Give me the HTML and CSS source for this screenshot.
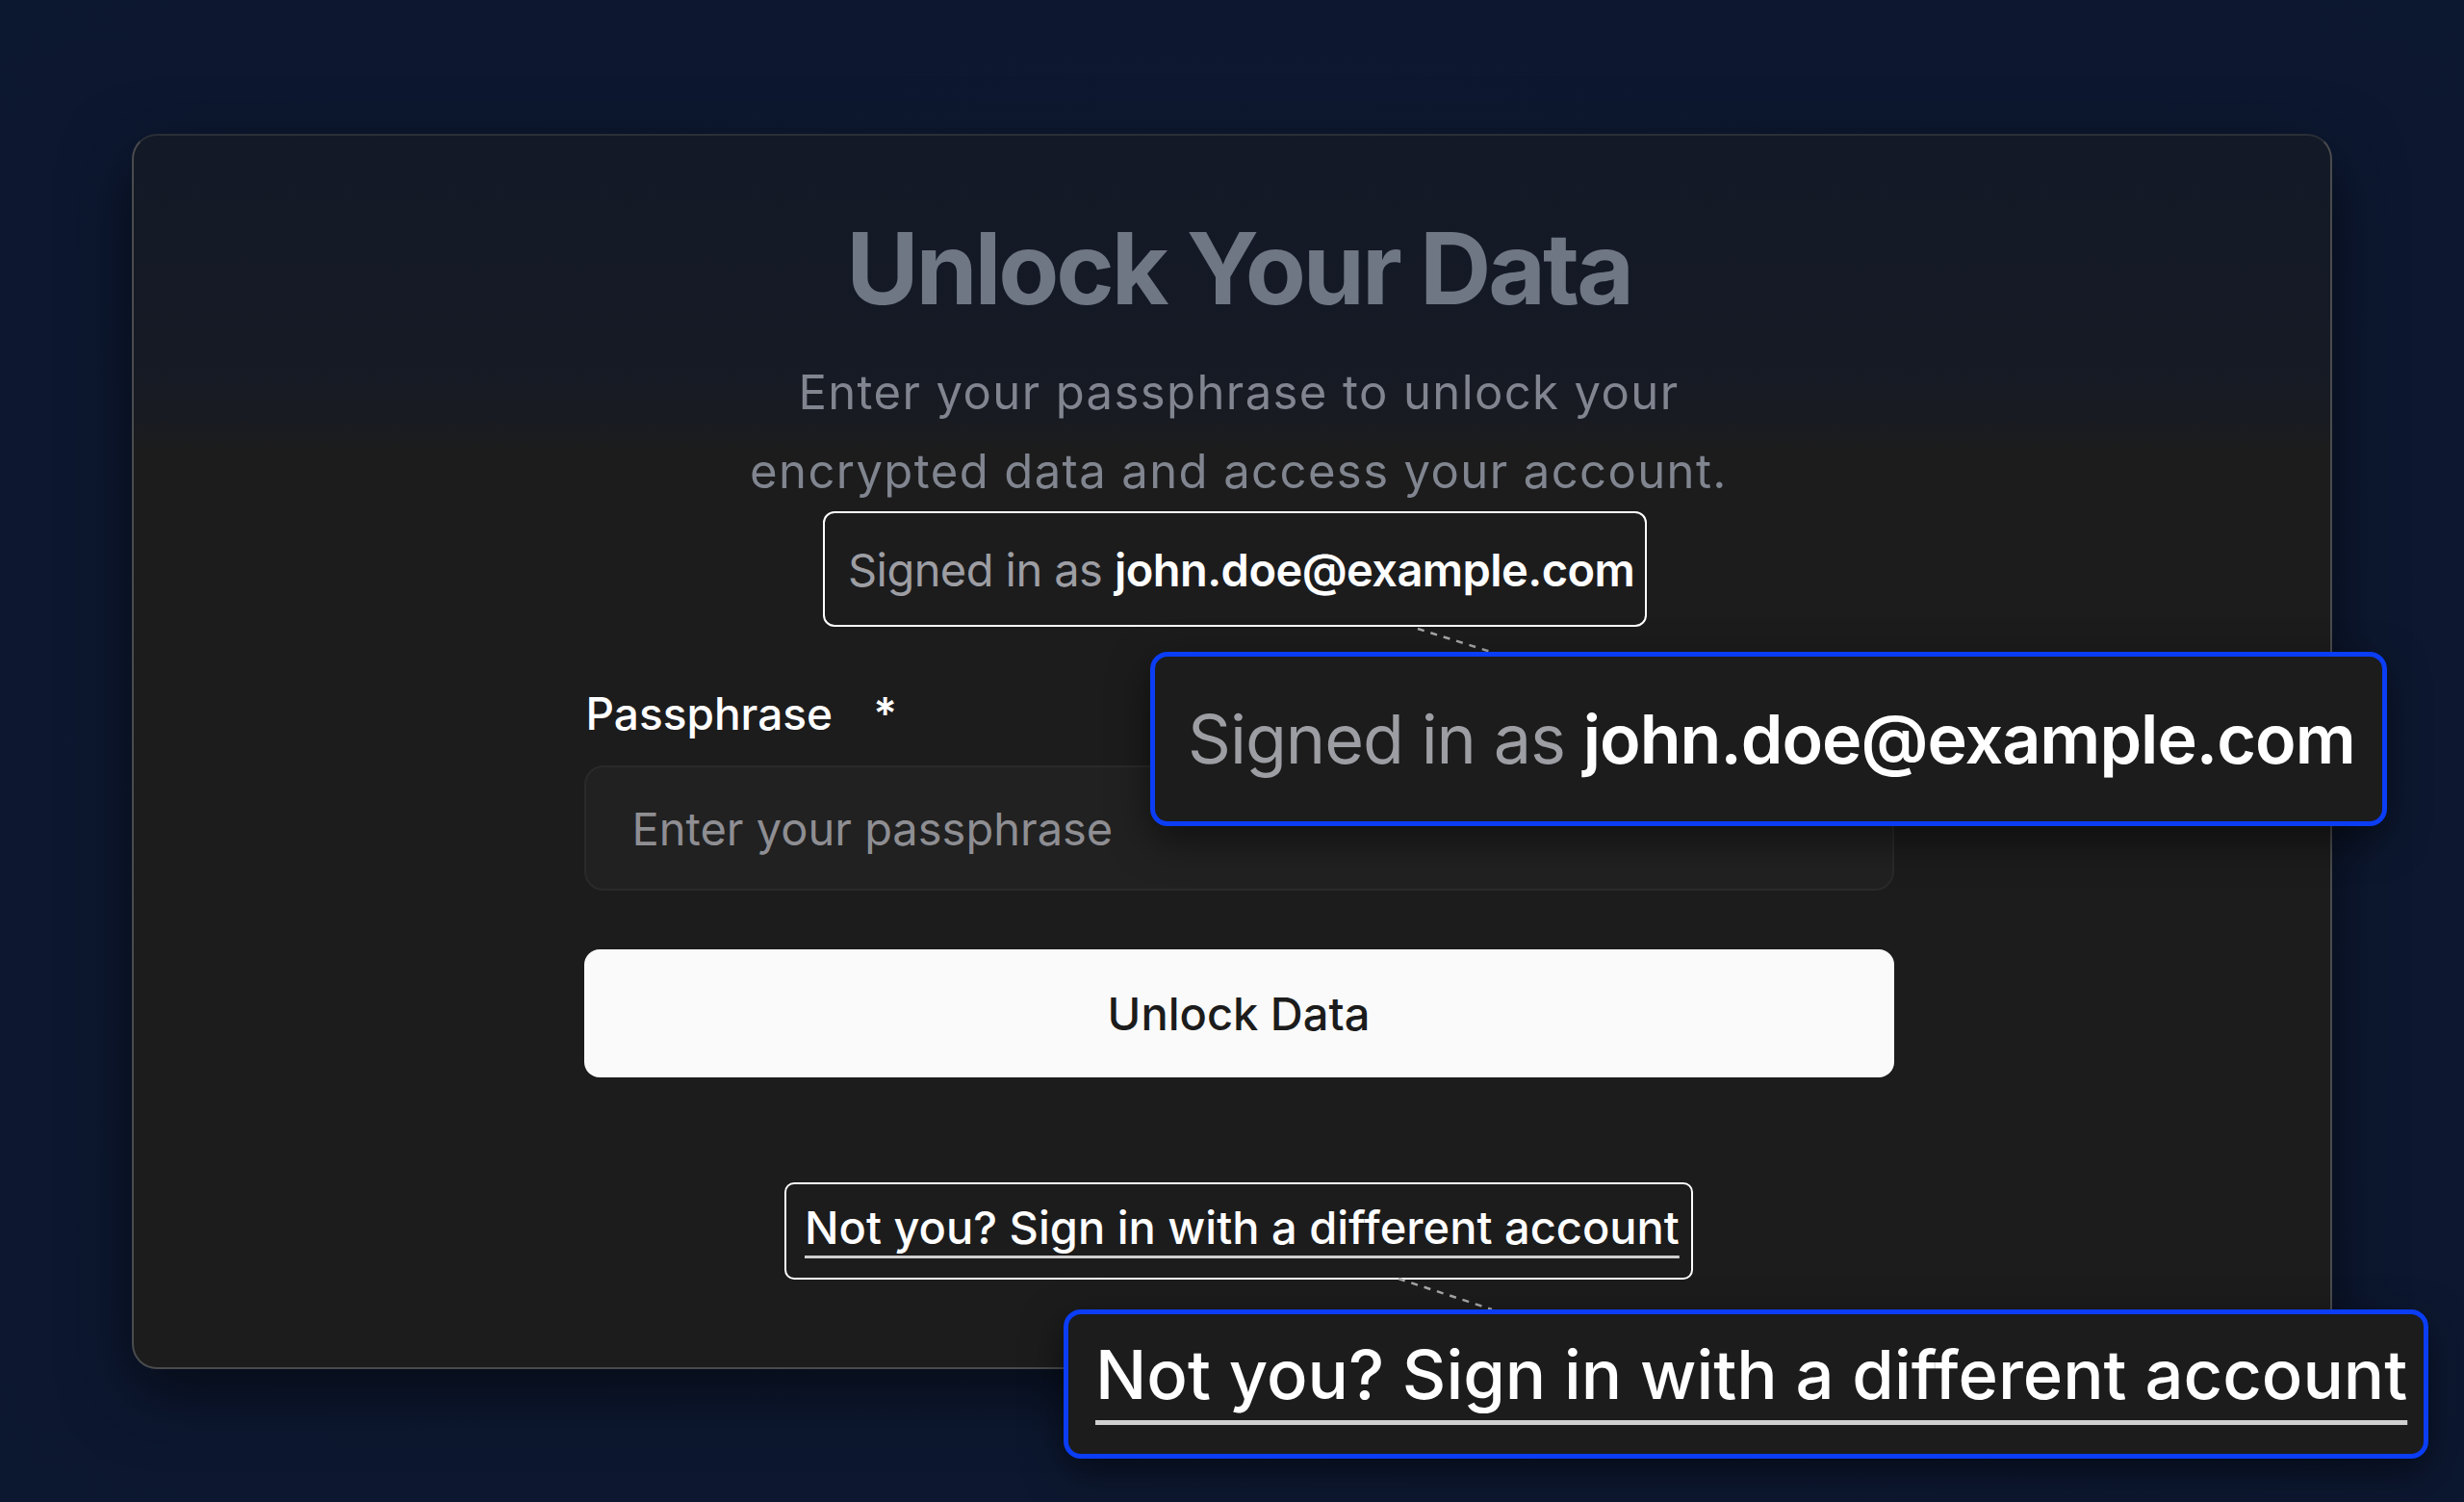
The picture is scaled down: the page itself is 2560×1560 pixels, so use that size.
FILE: index.html
```html
<!DOCTYPE html>
<html lang="en">
<head>
<meta charset="utf-8">
<title>Unlock Your Data</title>
<link rel="stylesheet" href="styles.css">
</head>
<body>
<div class="page">
  <main class="card">
    <h1 class="title">Unlock Your Data</h1>
    <p class="subtitle">Enter your passphrase to unlock your<br>encrypted data and access your account.</p>
    <div class="signed">Signed in as&nbsp;<strong>john.doe@example.com</strong></div>
    <form class="form">
      <label class="label" for="pp">Passphrase <span class="req">*</span></label>
      <input class="input" id="pp" type="password" placeholder="Enter your passphrase">
      <button class="btn" type="button">Unlock Data</button>
    </form>
    <div class="notyou"><a class="link" href="#">Not you? Sign in with a different account</a></div>
  </main>

  <svg class="leaders" width="2560" height="1560" viewBox="0 0 2560 1560">
    <line x1="1473" y1="653" x2="1552" y2="678" />
    <line x1="1453" y1="1328" x2="1550" y2="1360" />
  </svg>
  <div class="zoom zoom-signed">Signed in as&nbsp;<strong>john.doe@example.com</strong></div>
  <div class="zoom zoom-notyou"><span class="zlink">Not you? Sign in with a different account</span></div>
</div>
</body>
</html>
```
FILE: styles.css
```css
* { box-sizing: border-box; }
html, body { margin: 0; padding: 0; }
body {
  width: 2560px;
  height: 1560px;
  overflow: hidden;
  background: #0d1830;
  font-family: Inter, "Noto Sans", "Liberation Sans", sans-serif;
}
.page {
  position: relative;
  width: 2560px;
  height: 1560px;
  padding: 139px 137px 0 137px;
  background: radial-gradient(ellipse at 50% 50%, #0f1a33 0%, #0d1830 70%, #0c1730 100%);
}
.card {
  width: 2286px;
  height: 1283px;
  border: 2px solid #4a4b4d;
  border-top-color: #2a2e36;
  border-radius: 26px;
  background: linear-gradient(to bottom, #131926 0px, #151a25 230px, #191b21 300px, #1c1c1d 324px, #1c1c1c 100%);
  box-shadow: 0 24px 70px rgba(0, 0, 0, 0.55);
  display: flex;
  flex-direction: column;
  align-items: center;
  padding: 76px 0 0 14px;
}
.title {
  margin: 0;
  font-size: 103px;
  line-height: 124px;
  font-weight: 700;
  letter-spacing: -0.03em;
  color: #6f7684;
}
.subtitle {
  margin: 26px 0 0 0;
  font-size: 49px;
  line-height: 82px;
  letter-spacing: 1.4px;
  color: #80858f;
  text-align: center;
}
.signed {
  margin: 0 0 0 -8px;
  width: 856px;
  height: 120px;
  border: 2px solid #ffffff;
  border-radius: 12px;
  display: flex;
  align-items: center;
  padding: 0 10px 0 24px;
  font-size: 47px;
  letter-spacing: -0.012em;
  color: #9d9ea3;
  white-space: nowrap;
}
.signed strong, .zoom-signed strong { color: #ffffff; font-weight: 600; }
.form {
  width: 1361px;
  margin-top: 60px;
  display: flex;
  flex-direction: column;
}
.label {
  font-size: 46px;
  line-height: 60px;
  font-weight: 500;
  color: #ffffff;
  padding-left: 2px;
}
.req { margin-left: 30px; font-weight: 600; }
.input {
  margin-top: 24px;
  height: 130px;
  border: 2px solid #2a2a2a;
  border-radius: 20px;
  background: #212121;
  padding: 0 0 0 48px;
  font-family: inherit;
  font-size: 47px;
  color: #ffffff;
  outline: none;
}
.input::placeholder { color: #8e8e93; }
.btn {
  margin-top: 61px;
  height: 133px;
  border: none;
  border-radius: 16px;
  background: #fafafa;
  font-family: inherit;
  font-size: 47px;
  font-weight: 500;
  color: #1c1c1c;
}
.notyou {
  margin-top: 109px;
  width: 944px;
  height: 101px;
  border: 2px solid #ffffff;
  border-radius: 10px;
  display: flex;
  align-items: center;
  padding: 0 10px 8px 19px;
  white-space: nowrap;
}
.link {
  font-size: 47px;
  font-weight: 500;
  color: #ffffff;
  text-decoration: underline;
  text-decoration-thickness: 3px;
  text-underline-offset: 12px;
  text-decoration-color: #cfcfcf;
}
.leaders {
  position: absolute;
  left: 0;
  top: 0;
  pointer-events: none;
}
.leaders line {
  stroke: #a8a8a8;
  stroke-width: 2.5;
  stroke-dasharray: 7 7;
}
.zoom {
  position: absolute;
  background: #1c1c1c;
  border: 5px solid #0b3df5;
  border-radius: 18px;
  box-shadow: 0 14px 40px rgba(0, 0, 0, 0.5);
  display: flex;
  align-items: center;
  white-space: nowrap;
  color: #ffffff;
}
.zoom-signed {
  left: 1195px;
  top: 677px;
  width: 1285px;
  height: 181px;
  padding-left: 34px;
  font-size: 70px;
  letter-spacing: -0.014em;
  color: #9d9ea3;
}
.zoom-notyou {
  left: 1105px;
  top: 1360px;
  width: 1418px;
  height: 155px;
  padding: 0 0 20px 28px;
}
.zlink {
  font-size: 70.5px;
  font-weight: 500;
  color: #ffffff;
  text-decoration: underline;
  text-decoration-thickness: 5px;
  text-underline-offset: 22px;
  text-decoration-color: #d0d0d0;
}
```
